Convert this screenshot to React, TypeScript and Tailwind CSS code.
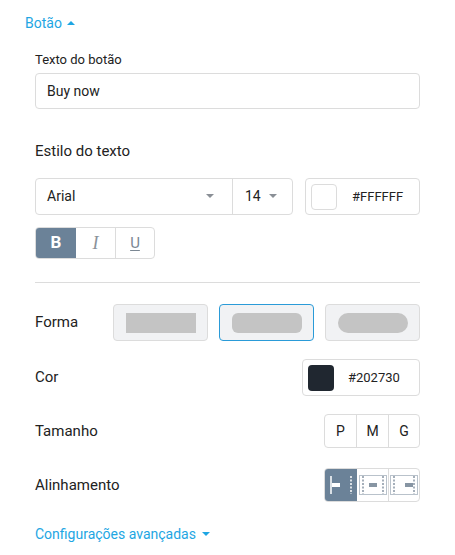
import React from 'react';

const Caret = ({ up, className }: { up?: boolean; className?: string }) => (
  <svg width="8" height="5" viewBox="0 0 8 5" className={className}>
    {up ? <path d="M0 5 L4 1 L8 5 Z" fill="currentColor" /> : <path d="M0 0 L4 4 L8 0 Z" fill="currentColor" />}
  </svg>
);

function AlignIcon({ pos, active }: { pos: 'left' | 'center' | 'right'; active?: boolean }) {
  const c = active ? '#ffffff' : '#8795a3';
  const barX = pos === 'left' ? 5 : pos === 'center' ? 10 : 15;
  return (
    <svg width="28" height="24" viewBox="0 0 28 24">
      {!active && <rect x="0.5" y="2.5" width="27" height="19" fill="none" stroke="#b9c2cb" strokeWidth="1" />}
      <line x1="4" y1="3" x2="4" y2="21" stroke={c} strokeWidth="1.5" strokeDasharray={active ? '0' : '2 1.5'} />
      <line x1="24" y1="3" x2="24" y2="21" stroke={c} strokeWidth="1.5" strokeDasharray="2 1.5" />
      <rect x={barX} y="10" width="8" height="4" fill={c} />
    </svg>
  );
}

export default function App() {
  return (
    <div className="w-[455px] h-[555px] bg-white text-[#222] font-['Roboto',sans-serif] pl-[25px] pt-[14px]">
      <div className="flex items-center gap-[5px] text-[14px] text-[#1ea6e3] h-[18px]">
        Botão <Caret up className="mt-[-1px]" />
      </div>

      <div className="pl-[10px] w-[395px]">
        <div className="mt-[20px] text-[13px] leading-[16px]">Texto do botão</div>
        <div className="mt-[5px] h-[36px] border border-[#dcdcdc] rounded-[4px] flex items-center px-[11px] text-[14px]">
          Buy now
        </div>

        <div className="mt-[33px] text-[15px] leading-[18px]">Estilo do texto</div>

        <div className="mt-[18px] flex gap-[12px]">
          <div className="w-[258px] h-[37px] border border-[#dcdcdc] rounded-[4px] flex">
            <div className="w-[197px] border-r border-[#dcdcdc] flex items-center justify-between pl-[11px] pr-[18px] text-[14px]">
              Arial <Caret className="text-[#8a8f96]" />
            </div>
            <div className="flex-1 flex items-center pl-[12px] gap-[8px] text-[14px]">
              14 <Caret className="text-[#8a8f96]" />
            </div>
          </div>
          <div className="flex-1 h-[37px] border border-[#dcdcdc] rounded-[4px] flex items-center pl-[5px] gap-[15px] text-[13px]">
            <div className="w-[26px] h-[26px] border border-[#dcdcdc] rounded-[4px] bg-white" />
            #FFFFFF
          </div>
        </div>

        <div className="mt-[12px] flex w-[120px] h-[32px] border border-[#dcdcdc] rounded-[4px] overflow-hidden">
          <div className="w-[40px] bg-[#6b8298] text-white font-bold flex items-center justify-center text-[17px]">B</div>
          <div className="w-[40px] border-r border-[#dcdcdc] flex items-center justify-center text-[18px] italic text-[#8a929a] font-['Liberation_Serif',serif]">
            I
          </div>
          <div className="flex-1 flex items-center justify-center text-[15px] underline underline-offset-2 text-[#7b8793]">U</div>
        </div>

        <div className="mt-[23px] border-t border-[#dcdcdc]" />

        <div className="mt-[21px] flex items-center justify-between">
          <div className="text-[15px]">Forma</div>
          <div className="flex gap-[11px]">
            <div className="w-[95px] h-[37px] bg-[#f1f2f4] border border-[#dcdcdc] rounded-[4px] flex items-center justify-center">
              <div className="w-[70px] h-[20px] bg-[#c4c4c4]" />
            </div>
            <div className="w-[95px] h-[37px] bg-[#f1f2f4] border border-[#2a9bd8] rounded-[4px] flex items-center justify-center">
              <div className="w-[70px] h-[20px] bg-[#c4c4c4] rounded-[6px]" />
            </div>
            <div className="w-[95px] h-[37px] bg-[#f1f2f4] border border-[#dcdcdc] rounded-[4px] flex items-center justify-center">
              <div className="w-[70px] h-[20px] bg-[#c4c4c4] rounded-full" />
            </div>
          </div>
        </div>

        <div className="mt-[18px] flex items-center justify-between">
          <div className="text-[15px]">Cor</div>
          <div className="w-[118px] h-[37px] border border-[#dcdcdc] rounded-[4px] flex items-center pl-[5px] gap-[14px] text-[13px]">
            <div className="w-[26px] h-[26px] rounded-[4px] bg-[#202730]" />
            #202730
          </div>
        </div>

        <div className="mt-[18px] flex items-center justify-between">
          <div className="text-[15px]">Tamanho</div>
          <div className="flex w-[96px] h-[34px] border border-[#dcdcdc] rounded-[4px] text-[14px]">
            <div className="w-[32px] border-r border-[#dcdcdc] flex items-center justify-center">P</div>
            <div className="w-[32px] border-r border-[#dcdcdc] flex items-center justify-center">M</div>
            <div className="flex-1 flex items-center justify-center">G</div>
          </div>
        </div>

        <div className="mt-[20px] flex items-center justify-between">
          <div className="text-[15px]">Alinhamento</div>
          <div className="flex w-[96px] h-[34px] border border-[#dcdcdc] rounded-[4px] overflow-hidden">
            <div className="w-[32px] bg-[#6b8298] flex items-center justify-center">
              <AlignIcon pos="left" active />
            </div>
            <div className="w-[32px] border-r border-[#dcdcdc] flex items-center justify-center">
              <AlignIcon pos="center" />
            </div>
            <div className="flex-1 flex items-center justify-center">
              <AlignIcon pos="right" />
            </div>
          </div>
        </div>

        <div className="mt-[22px] flex items-center gap-[6px] text-[14px] text-[#1ea6e3]">
          Configurações avançadas <Caret />
        </div>
      </div>
    </div>
  );
}
